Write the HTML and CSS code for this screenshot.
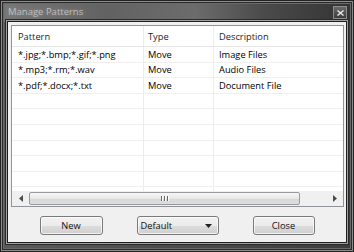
FILE: index.html
```html
<!DOCTYPE html>
<html>
<head>
<meta charset="utf-8">
<link rel="stylesheet" href="styles.css">
</head>
<body>
<div class="window">
  <div class="titlebar">
    <span class="title">Manage Patterns</span>
    <span class="close-box"><svg width="7" height="6" viewBox="0 0 7 6"><path d="M0.5 0.5 L6.5 5.5 M6.5 0.5 L0.5 5.5" stroke="#e8e8e8" stroke-width="1.4"/></svg></span>
  </div>
  <div class="client">
    <div class="listview">
      <div class="lv-header">
        <div class="cell c1">Pattern</div>
        <div class="cell c2">Type</div>
        <div class="cell c3">Description</div>
      </div>
      <div class="lv-rows">
        <div class="row"><div class="cell c1">*.jpg;*.bmp;*.gif;*.png</div><div class="cell c2">Move</div><div class="cell c3">Image Files</div></div>
        <div class="row"><div class="cell c1">*.mp3;*.rm;*.wav</div><div class="cell c2">Move</div><div class="cell c3">Audio Files</div></div>
        <div class="row"><div class="cell c1">*.pdf;*.docx;*.txt</div><div class="cell c2">Move</div><div class="cell c3">Document File</div></div>
        <div class="row"><div class="cell c1"></div><div class="cell c2"></div><div class="cell c3"></div></div>
        <div class="row"><div class="cell c1"></div><div class="cell c2"></div><div class="cell c3"></div></div>
        <div class="row"><div class="cell c1"></div><div class="cell c2"></div><div class="cell c3"></div></div>
        <div class="row"><div class="cell c1"></div><div class="cell c2"></div><div class="cell c3"></div></div>
        <div class="row"><div class="cell c1"></div><div class="cell c2"></div><div class="cell c3"></div></div>
        <div class="row"><div class="cell c1"></div><div class="cell c2"></div><div class="cell c3"></div></div>
        <div class="row"><div class="cell c1"></div><div class="cell c2"></div><div class="cell c3"></div></div>
      </div>
      <div class="hscroll">
        <div class="arrow"><svg width="4" height="7" viewBox="0 0 4 7"><path d="M4 0 L0 3.5 L4 7 Z" fill="#4d4d4d"/></svg></div>
        <div class="track">
          <div class="thumb"><span class="grip"></span><span class="grip"></span><span class="grip"></span></div>
        </div>
        <div class="arrow"><svg width="4" height="7" viewBox="0 0 4 7"><path d="M0 0 L4 3.5 L0 7 Z" fill="#4d4d4d"/></svg></div>
      </div>
    </div>
    <div class="buttons">
      <div class="btn btn-new">New</div>
      <div class="btn combo"><span class="combo-text">Default</span><svg width="7" height="4" viewBox="0 0 7 4"><path d="M0 0 L7 0 L3.5 4 Z" fill="#222"/></svg></div>
      <div class="btn btn-close">Close</div>
    </div>
  </div>
</div>
</body>
</html>
```

FILE: styles.css
```css
html, body {
  margin: 0;
  padding: 0;
}
body {
  width: 354px;
  height: 252px;
  overflow: hidden;
  font-family: "Open Sans", "Noto Sans", sans-serif;
  font-size: 9.3px;
  color: #000;
  background: #3a3a3a;
}
.window {
  width: 354px;
  height: 252px;
  box-sizing: border-box;
  border: 1px solid #222;
  padding: 0 6px 8px 6px;
  display: flex;
  flex-direction: column;
  background:
    linear-gradient(to right, #767676 0%, #626262 30%, #6c6c6c 55%, #4a4a4a 75%, #333 100%) top left / 100% 21px no-repeat,
    linear-gradient(to right, #5a5a5a, #3c3c3c);
  box-shadow:
    inset 0 0 0 1px #8c8c8c,
    inset 0 0 0 2px #2a2a2a,
    inset 0 0 0 3px #6a6a6a;
}
.titlebar {
  height: 20px;
  display: flex;
  align-items: center;
  padding-left: 1px;
}
.title {
  color: #bdbdbd;
  font-size: 9.5px;
  text-shadow: 0 0 5px rgba(210,210,210,0.45);
  margin-top: 1px;
}
.close-box {
  margin-left: auto;
  width: 12px;
  height: 11px;
  border: 1px solid #8c8c8c;
  background: linear-gradient(#6a6a6a, #3c3c3c);
  display: flex;
  align-items: center;
  justify-content: center;
  align-self: flex-start;
  margin-top: 5px;
}
.client {
  flex: 1;
  background: #f0f0f0;
  border: 1px solid #1e1e1e;
  box-shadow: 0 0 0 1px #a0a0a0, 0 0 0 2px #2a2a2a;
  padding: 3px 2px 0 3px;
  display: flex;
  flex-direction: column;
}
.listview {
  height: 182px;
  box-sizing: border-box;
  border: 1px solid #8e939c;
  background: #fff;
  display: flex;
  flex-direction: column;
}
.lv-header {
  height: 20px;
  display: flex;
  border-bottom: 1px solid #e6e6e6;
  flex-shrink: 0;
}
.cell {
  box-sizing: border-box;
  padding-left: 5px;
  white-space: nowrap;
  overflow: hidden;
  display: flex;
  align-items: center;
}
.c1 { width: 132px; border-right: 1px solid #ececec; padding-left: 6px; }
.c2 { width: 70px; border-right: 1px solid #ececec; padding-left: 4px; }
.c3 { flex: 1; }
.lv-header .cell { color: #1e1e1e; }
.lv-rows {
  flex: 1;
  overflow: hidden;
}
.row {
  height: 15.6px;
  box-sizing: border-box;
  display: flex;
  border-bottom: 1px solid #efefef;
}
.hscroll {
  height: 15px;
  display: flex;
  flex-shrink: 0;
  background: #f0f0f0;
}
.arrow {
  width: 17px;
  display: flex;
  align-items: center;
  justify-content: center;
}
.track {
  flex: 1;
  padding: 1px 0;
  display: flex;
}
.thumb {
  width: 271px;
  box-sizing: border-box;
  border: 1px solid #9a9a9a;
  border-radius: 2px;
  background: linear-gradient(#f6f6f6, #e8e8e8 50%, #d8d8d8 51%, #dedede);
  display: flex;
  align-items: center;
  justify-content: center;
  gap: 1px;
}
.grip {
  width: 1px;
  height: 5px;
  background: #666;
  border-right: 1px solid #fff;
}
.buttons {
  display: flex;
  justify-content: center;
  gap: 34px;
  margin-top: 9px;
  padding-right: 1px;
}
.btn {
  height: 19px;
  box-sizing: border-box;
  border: 1px solid #7a7a7a;
  border-radius: 3px;
  background: linear-gradient(#f2f2f2 0%, #ebebeb 50%, #dddddd 51%, #cfcfcf 100%);
  box-shadow: inset 0 0 0 1px rgba(255,255,255,0.7);
  display: flex;
  align-items: center;
  justify-content: center;
  color: #111;
}
.btn-new { width: 63px; }
.btn-close { width: 62px; }
.combo {
  width: 82px;
  justify-content: space-between;
  padding: 0 6px 0 3px;
}
```
